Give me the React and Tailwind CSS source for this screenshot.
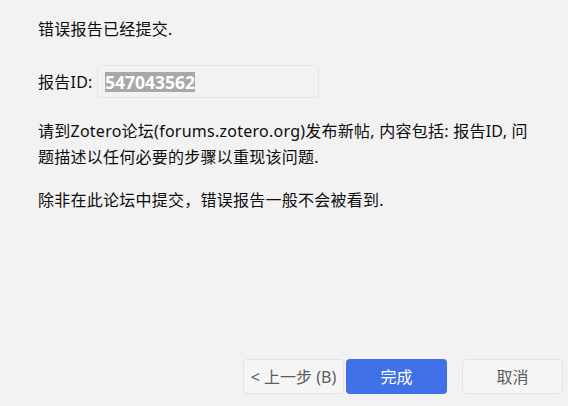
import React from "react";

export default function App() {
  return (
    <div
      className="w-[568px] h-[406px] bg-[#f2f2f2] flex flex-col text-[16px] text-[#0d0d0d]"
      style={{ fontFamily: '"Noto Sans", "Noto Sans CJK SC", sans-serif' }}
    >
      <div className="flex flex-col pl-[38px] pt-[16px] tracking-[0.25px]">
        <p className="leading-[26px]">错误报告已经提交.</p>
        <div className="flex items-center mt-[23px] h-[33px]">
          <span className="leading-[26px] w-[59px]">报告ID:</span>
          <div className="w-[222px] h-[33px] border border-[#e3e3e3] rounded-[4px] bg-[#f2f2f2] flex items-center pl-[7px]">
            <span className="bg-[#a8a8a8] text-white font-bold text-[17.5px] tracking-normal leading-[20px] h-[20px] flex items-center">
              547043562
            </span>
          </div>
        </div>
        <p className="leading-[26px] mt-[20px]">
          请到Zotero论坛(forums.zotero.org)发布新帖, 内容包括: 报告ID, 问
          <br />
          题描述以任何必要的步骤以重现该问题.
        </p>
        <p className="leading-[26px] mt-[17px]">除非在此论坛中提交，错误报告一般不会被看到.</p>
      </div>
      <div className="mt-auto flex justify-end pr-[5px] pb-[12px]">
        <button className="w-[101px] h-[35px] rounded-[4px] border border-[#e2e2e2] bg-[#f5f5f5] text-[#5c5c5c] text-[16px]">
          &lt; 上一步 (B)
        </button>
        <button className="ml-[2px] w-[101px] h-[35px] rounded-[4px] bg-[#4171e6] text-white text-[16px]">
          完成
        </button>
        <button className="ml-[15px] w-[101px] h-[35px] rounded-[4px] border border-[#e2e2e2] bg-[#f5f5f5] text-[#5c5c5c] text-[16px]">
          取消
        </button>
      </div>
    </div>
  );
}
